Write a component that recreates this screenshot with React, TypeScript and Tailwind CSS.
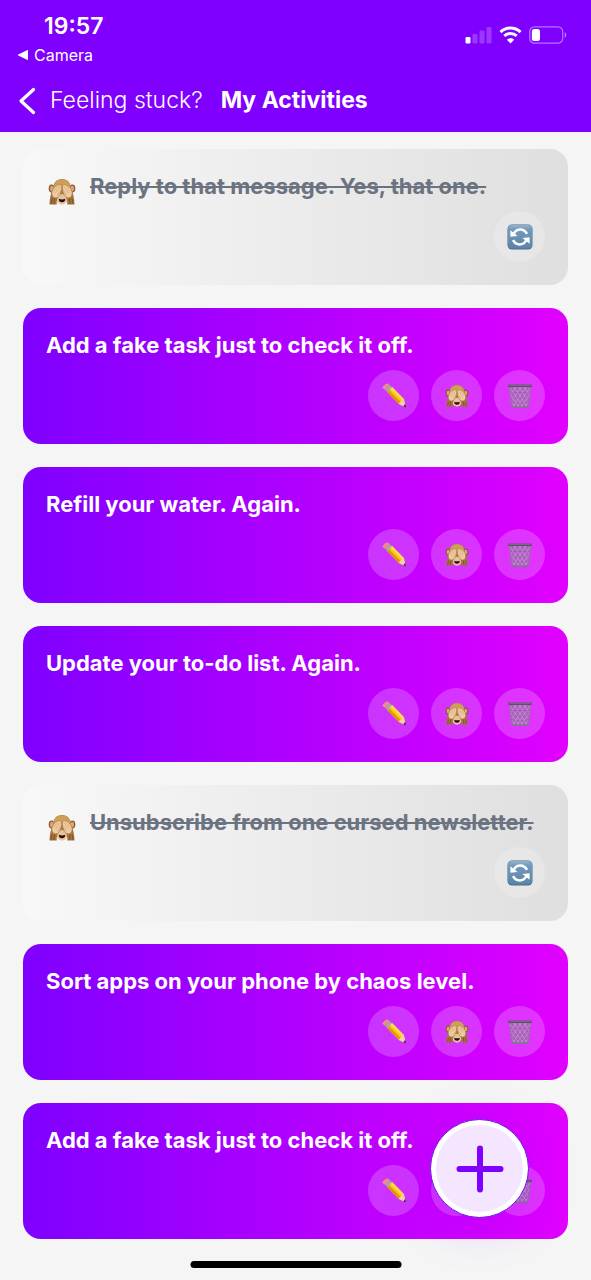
import { useState } from "react";

type Activity = { id: number; title: string; hidden: boolean };

const ACTIVITIES: Activity[] = [
  { id: 1, title: "Reply to that message. Yes, that one.", hidden: true },
  { id: 2, title: "Add a fake task just to check it off.", hidden: false },
  { id: 3, title: "Refill your water. Again.", hidden: false },
  { id: 4, title: "Update your to-do list. Again.", hidden: false },
  { id: 5, title: "Unsubscribe from one cursed newsletter.", hidden: true },
  { id: 6, title: "Sort apps on your phone by chaos level.", hidden: false },
  { id: 7, title: "Add a fake task just to check it off.", hidden: false },
];

function MonkeyIcon({ className }: { className: string }) {
  return (
    <svg className={className} viewBox="0 0 28 28" aria-hidden="true">
      <ellipse cx="3.600" cy="10.500" rx="2.900" ry="4" fill="#8a5c33" />
      <ellipse cx="24.400" cy="10.500" rx="2.900" ry="4" fill="#8a5c33" />
      <ellipse cx="3.800" cy="10.600" rx="1.800" ry="2.800" fill="#dba878" />
      <ellipse cx="24.200" cy="10.600" rx="1.800" ry="2.800" fill="#dba878" />
      <path d="M14 1C8.500 1 5 5 5 11.500c0 4 1 8 3 11l6 3.500 6-3.500c2-3 3-7 3-11C23 5 19.500 1 14 1z" fill="#a9793d" />
      <path d="M14 1.500c-5 0-8 3-8.500 8h17c-.5-5-3.500-8-8.500-8z" fill="#cda057" />
      <ellipse cx="14" cy="21.200" rx="5.200" ry="5.200" fill="#e6c39c" />
      <path d="M10.900 20.800c1.800.8 4.400.8 6.200 0 .4 2-1 3.500-3.100 3.500s-3.500-1.500-3.100-3.500z" fill="#2a0d08" />
      <path d="M5 11c-2 3.500-3.400 9-3.500 15.500h7.300c-.3-3.200 0-5 1.200-7l1.500-4z" fill="#a4743f" />
      <path d="M23 11c2 3.500 3.400 9 3.500 15.500h-7.300c.3-3.200 0-5-1.200-7l-1.500-4z" fill="#a4743f" />
      <path d="M13.600 7.500C11.500 5.900 7.500 7.200 5 11c-1.500 2.400-1.500 6.200.1 8 2 1.400 4.400 1 5.500-.5 2.200-2.700 3.400-7 3-11z" fill="#efcba2" stroke="#a7753f" strokeWidth=".6" />
      <path d="M14.400 7.500c2.100-1.600 6.100-.3 8.600 3.500 1.500 2.400 1.500 6.200-.1 8-2 1.400-4.400 1-5.500-.5-2.200-2.700-3.400-7-3-11z" fill="#efcba2" stroke="#a7753f" strokeWidth=".6" />
      <path d="m12 9-4.500 5.500M9.800 8.500l-4 4.500M12.800 12l-3.300 5M16 9l4.500 5.500M18.200 8.500l4 4.500M15.200 12l3.300 5" stroke="#cfa071" strokeWidth=".7" strokeLinecap="round" fill="none" />
      <path d="M4 20.500 3 26M6.500 20.500l-.6 5.500M24 20.500l1 5.500M21.500 20.500l.6 5.500" stroke="#74491f" strokeWidth=".8" fill="none" />
    </svg>
  );
}

function PencilIcon() {
  return (
    <svg className="size-[26px]" viewBox="0 0 26 26" aria-hidden="true">
      <path d="m1.500 4 3-3c1-1 2.600-.6 3.500.3l1.200 1.200-4.700 4.700-2.200-1.700C1.400 4.900 1 4.500 1.500 4z" fill="#ef8b8b" />
      <path d="m4.300 6.700 4.500-4.500 2.700 2.500-4.700 5z" fill="#8c8b96" />
      <path d="m5 7.500 4.500-4.600M6 8.700l4.600-4.800" stroke="#dddbe2" strokeWidth=".7" />
      <path d="m6.400 9.200 4.900-5L23 16.200l-4.900 5z" fill="#fcc419" />
      <path d="m6.400 9.200 1.700-1.700 11.800 11.800-1.800 1.900z" fill="#df9707" />
      <path d="m9.500 6 1.800-1.800L23 16.200l-1.500 1.500z" fill="#ffe04a" />
      <path d="M23 16.200c-.8-.3-1.300.2-1.500 1.300-1.100-.1-1.700.4-1.700 1.600-1-.2-1.700.6-1.700 2.100l6.900 3.300z" fill="#f4d1a3" />
      <path d="m22.400 23.200 1.800-2.400.9 3.900z" fill="#33272e" />
    </svg>
  );
}

function TrashIcon() {
  return (
    <svg className="size-[26px]" viewBox="0 0 26 26" aria-hidden="true">
      <path d="M2.500 3.200 4.600 24c3 1.300 13.800 1.300 16.800 0l2.100-20.800z" fill="#94789f" fillOpacity=".6" />
      <path d="m3 5 13 19M7 4l12.500 19M12 4l8.800 13.500M17 4l5 7.500M3.800 12l8 12M5 19l3 5M23 5 10 24M19 4 6.500 23M14 4 5.200 17.500M9 4 4 11.500M22.200 12l-8 12M21 19l-3 5" stroke="#c3acd0" strokeWidth=".6" />
      <path d="M3.600 9.500h18.800M4.200 15h17.600M4.600 20h16.800" stroke="#7d6688" strokeWidth=".4" />
      <path d="M2.500 4 4.600 23.500M23.500 4l-2.100 19.500" stroke="#8d7b98" strokeWidth=".9" />
      <path d="M4.500 22.700c3 .9 14 .9 17 0v1.500c-3 1.200-14 1.200-17 0z" fill="#84738e" />
      <rect x="1" y="1.500" width="24" height="2.600" rx="1.200" fill="#5b5263" />
      <path d="M2.200 2.200h21.600" stroke="#9c8ca6" strokeWidth=".6" />
    </svg>
  );
}

function RefreshIcon() {
  return (
    <svg className="size-[26px]" viewBox="0 0 26 26" aria-hidden="true">
      <defs>
        <linearGradient id="refresh-tile" x1="0" y1="0" x2="0" y2="1">
          <stop offset="0" stopColor="#92b4cf" />
          <stop offset=".2" stopColor="#7299ba" />
          <stop offset="1" stopColor="#5a84a8" />
        </linearGradient>
      </defs>
      <rect x=".5" y=".5" width="25" height="25" rx="4.500" fill="#4a6d8d" />
      <rect x="1" y="1" width="24" height="23.500" rx="4" fill="url(#refresh-tile)" />
      <path d="M7 9.500C9.600 4.300 16.800 4 20 9.800M19 16.500c-2.600 5.200-9.800 5.500-13-.3" stroke="#fff" strokeWidth="2.500" fill="none" />
      <path d="M3.400 6.300v6.400l7.200-.8zM22.600 19.700v-6.400l-7.200.8z" fill="#fff" />
    </svg>
  );
}

function StatusBar() {
  return (
    <div className="flex items-start justify-between pr-6 pl-[18px]">
      <div>
        <div className="pt-3 pl-[26px] text-[23px] leading-7 font-semibold">19:57</div>
        <a href="#camera" className="mt-1 flex items-center gap-[6px] text-[16px] leading-[22px] tracking-normal">
          <svg className="h-[10px] w-[10px]" viewBox="0 0 10 10" fill="currentColor" aria-hidden="true">
            <path d="M.3 4.400 9 .2q1-.4 1 .6v8.400q0 1-1 .6L.3 5.600q-.6-.6 0-1.200z" />
          </svg>
          Camera
        </a>
      </div>
      <div className="flex items-center gap-[7px] pt-[26px]">
        <svg className="h-[18px] w-[27px]" viewBox="0 0 27 18" fill="currentColor" aria-label="Signal">
          <rect x="0.500" y="11" width="5" height="6.500" rx="1.300" />
          <g opacity=".22">
            <rect x="7.500" y="8" width="5" height="9.500" rx="1.300" />
            <rect x="14.500" y="4.500" width="5" height="13" rx="1.300" />
            <rect x="21.500" y="1" width="5" height="16.500" rx="1.300" />
          </g>
        </svg>
        <svg className="h-[18px] w-[23px]" viewBox="0 0 23 18" aria-label="Wi-Fi">
          <path d="M1.500 6.100C7.200.7 15.800.7 21.500 6.100M5.300 9.900c3.600-3.300 8.800-3.300 12.400 0" fill="none" stroke="currentColor" strokeWidth="3" />
          <path d="M11.500 17.500 7.900 13.700c2.100-1.900 5.100-1.900 7.200 0z" fill="currentColor" />
        </svg>
        <svg className="h-[18px] w-[38px]" viewBox="0 0 38 18" aria-label="Battery">
          <rect x=".7" y=".8" width="33" height="16.400" rx="4.800" fill="none" stroke="currentColor" strokeOpacity=".45" strokeWidth="1.200" />
          <rect x="2.800" y="2.900" width="8.200" height="12.200" rx="2.500" fill="currentColor" />
          <path d="M35.700 6.300c2 .7 2 4.700 0 5.400z" fill="currentColor" opacity=".5" />
        </svg>
      </div>
    </div>
  );
}

function CircleButton({
  label,
  muted = false,
  onClick,
  children,
}: {
  label: string;
  muted?: boolean;
  onClick?: () => void;
  children: React.ReactNode;
}) {
  return (
    <button
      type="button"
      aria-label={label}
      onClick={onClick}
      className={`flex size-[51px] items-center justify-center rounded-full ${muted ? "bg-white/20" : "bg-white/20"}`}
    >
      {children}
    </button>
  );
}

function ActivityCard({
  activity,
  onToggle,
  onDelete,
}: {
  activity: Activity;
  onToggle: () => void;
  onDelete: () => void;
}) {
  if (activity.hidden) {
    return (
      <li className="flex flex-col gap-[11px] rounded-[18px] bg-linear-to-r/srgb from-[#f8f8f8] to-[#dfdfdf] p-[23px]">
        <div className="flex h-7 items-start gap-[14px] pl-[2px]">
          <MonkeyIcon className="mt-[6px] size-7 shrink-0" />
          <h2 className="text-[22px] leading-7 font-bold text-[#6b7280] line-through decoration-2">{activity.title}</h2>
        </div>
        <div className="flex justify-end">
          <CircleButton label="Restore" muted onClick={onToggle}>
            <RefreshIcon />
          </CircleButton>
        </div>
      </li>
    );
  }
  return (
    <li className="flex flex-col gap-[11px] rounded-[18px] bg-linear-to-r/srgb from-[#7f00ff] to-[#e100ff] p-[23px]">
      <h2 className="text-[22px] leading-7 font-bold text-white">{activity.title}</h2>
      <div className="flex justify-end gap-3">
        <CircleButton label="Edit">
          <PencilIcon />
        </CircleButton>
        <CircleButton label="Hide" onClick={onToggle}>
          <MonkeyIcon className="size-6" />
        </CircleButton>
        <CircleButton label="Delete" onClick={onDelete}>
          <TrashIcon />
        </CircleButton>
      </div>
    </li>
  );
}

export default function App() {
  const [activities, setActivities] = useState(ACTIVITIES);

  const toggle = (id: number) =>
    setActivities((list) => list.map((a) => (a.id === id ? { ...a, hidden: !a.hidden } : a)));
  const remove = (id: number) => setActivities((list) => list.filter((a) => a.id !== id));

  return (
    <div className="min-h-screen bg-[#f5f5f5] font-['Inter','Liberation_Sans',sans-serif]">
      <header className="bg-[#7f00ff] pb-[14px] text-white">
        <StatusBar />
        <nav className="mt-[17px] flex items-center pl-[18px] text-[23px] leading-[35px]">
          <a href="#back" className="flex items-center gap-[14px] font-light">
            <svg className="h-7 w-[18px]" viewBox="0 0 18 28" fill="none" stroke="currentColor" strokeWidth="3.200" strokeLinecap="round" strokeLinejoin="round" aria-hidden="true">
              <path d="M15.500 2.500 3 14l12.500 11.500" />
            </svg>
            Feeling stuck?
          </a>
          <h1 className="ml-[18px] font-bold">My Activities</h1>
        </nav>
      </header>

      <main className="px-[23px] pt-[17px] pb-10">
        <ul className="flex flex-col gap-[23px]">
          {activities.map((a) => (
            <ActivityCard key={a.id} activity={a} onToggle={() => toggle(a.id)} onDelete={() => remove(a.id)} />
          ))}
        </ul>
      </main>

      <button
        type="button"
        aria-label="Add activity"
        className="fixed right-[62px] bottom-[62px] flex size-[99px] items-center justify-center rounded-full border-[1px] border-[#6d14e0] bg-white shadow-[0_8px_52px_rgba(127,0,255,0.2)]"
      >
        <span className="flex size-[87px] items-center justify-center rounded-full bg-[#f5e6ff]">
          <svg className="size-12" viewBox="0 0 48 48" stroke="#7f00ff" strokeWidth="6" strokeLinecap="round" aria-hidden="true">
            <path d="M24 3.500v41M3.500 24h41" />
          </svg>
        </span>
      </button>
      <div className="fixed bottom-3 left-1/2 h-[7px] w-[211px] -translate-x-1/2 rounded-full bg-black" />
    </div>
  );
}
